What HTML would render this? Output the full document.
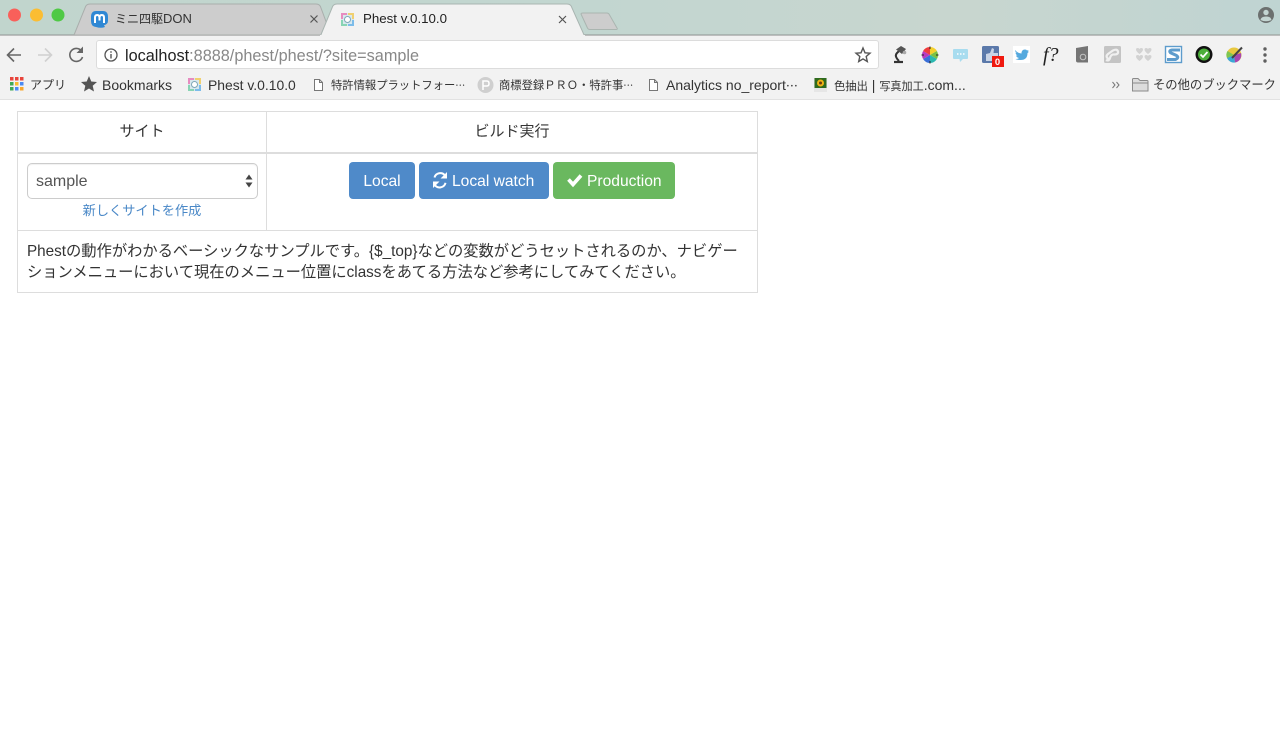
<!DOCTYPE html>
<html lang="ja">
<head>
<meta charset="utf-8">
<title>Phest v.0.10.0</title>
<style>
html,body{margin:0;padding:0;width:1280px;height:745px;overflow:hidden;background:#fff;}
body{position:relative;font-family:"Liberation Sans","Noto Sans CJK JP",sans-serif;color:#333;}
.a{position:absolute;white-space:nowrap;}
svg{position:absolute;overflow:visible;}
.bm{font-size:13px;line-height:16px;top:77px;color:#333;}
.el{font-family:"Noto Sans CJK JP",sans-serif;font-size:10px;}
.cell{position:absolute;box-sizing:border-box;}
.btn{position:absolute;top:162px;height:37px;border-radius:4px;color:#fff;font-size:15.600px;line-height:39px;text-align:center;white-space:nowrap;box-sizing:border-box;}
</style>
</head>
<body>
<!-- title bar -->
<div class="a" style="left:0;top:0;width:1280px;height:35px;background:linear-gradient(90deg,#c1d5cd 0%,#c2d6d0 45%,#c8d6cf 75%,#bfd4d2 100%);"></div>
<div class="a" style="left:0;top:34px;width:1280px;height:1px;background:#a9b5b1;"></div>
<svg style="left:0;top:0" width="1280" height="40">
  <circle cx="14.500" cy="15" r="6.500" fill="#f9605a"/>
  <circle cx="36.500" cy="15" r="6.500" fill="#fbbd32"/>
  <circle cx="58" cy="15" r="6.500" fill="#4fc945"/>
  <path d="M74 35 L85 8 Q86 4 90 4 L316 4 Q320 4 321 8 L331 35 Z" fill="#cdcdcd" stroke="#a9aeac" stroke-width="1"/>
  <path d="M320 37 L332 8 Q333 4 337 4 L567 4 Q571 4 572 8 L585 37 Z" fill="#f2f2f2" stroke="#a9b5b1" stroke-width="1"/>
  <path d="M581 14 Q581 13 583 13 L607 13 Q608 13 609 14 L617 28 Q618 29.500 616 29.500 L590 29.500 Q588 29.500 587.500 28 Z" fill="#cdcdcd" stroke="#aab5b0" stroke-width="1"/>
  <!-- mastodon -->
  <path d="M96 11 Q91 11 91 17 L91 21 Q91 26.500 96 27 Q101 28.500 105 27 L104 25.200 Q108 24.500 108 20.500 L108 17 Q108 11 103 11 Z" fill="#3088d4"/>
  <path d="M95 23 L95 17.500 Q95 15 97.200 15 Q99.500 15 99.500 18 L99.500 20.500 M99.500 18 Q99.500 15 101.800 15 Q104 15 104 17.500 L104 23" fill="none" stroke="#fff" stroke-width="2"/>
  <!-- close x -->
  <path d="M310.500 15.500 L317.500 22.500 M317.500 15.500 L310.500 22.500 M559 16 L566 23 M566 16 L559 23" stroke="#555" stroke-width="1.200"/>
  <!-- phest tab icon -->
  <g transform="translate(341,13)">
    <rect x="0" y="0" width="13" height="13" rx="1.500" fill="#d8e8ee"/>
    <path d="M0 0H6V2H2V6H0Z" fill="#e78cc0"/><path d="M7 0H13V6H11V2H7Z" fill="#f0d070"/><path d="M0 7H2V11H6V13H0Z" fill="#88d4b4"/><path d="M13 7V13H7V11H11V7Z" fill="#7cbcea"/>
    <circle cx="6.500" cy="6.500" r="3" fill="#fff" stroke="#7fa8b8" stroke-width="1"/>
  </g>
  <!-- avatar -->
  <circle cx="1266" cy="15" r="8" fill="#6c706f"/>
  <circle cx="1266" cy="12.500" r="2.700" fill="#c3d5d2"/>
  <path d="M1260.500 20 Q1261 16.500 1266 16.500 Q1271 16.500 1271.500 20 Q1266 22.500 1260.500 20Z" fill="#c3d5d2"/>
</svg>
<div class="a" style="left:115px;top:11px;font-size:13px;line-height:16px;color:#333;"><span style="font-size:12px">ミニ四駆</span>DON</div>
<div class="a" style="left:363px;top:11px;font-size:13.300px;line-height:16px;color:#222;">Phest v.0.10.0</div>

<!-- toolbar -->
<div class="a" style="left:0;top:35px;width:1280px;height:65px;background:#f2f2f2;"></div>
<div class="a" style="left:0;top:35px;width:320px;height:1px;background:#bdbdbd;"></div>
<div class="a" style="left:585px;top:35px;width:695px;height:1px;background:#bdbdbd;"></div>
<div class="a" style="left:0;top:99px;width:1280px;height:1px;background:#e2e2e2;"></div>
<div class="a" style="left:96px;top:40px;width:783px;height:29px;box-sizing:border-box;background:#fff;border:1px solid #dcdcdc;border-radius:3px;"></div>
<svg style="left:0;top:0" width="1280" height="100">
  <path d="M21 55 H8 M14 48.500 L7.500 55 L14 61.500" fill="none" stroke="#666" stroke-width="1.600"/>
  <path d="M38 55 H51 M45 48.500 L51.500 55 L45 61.500" fill="none" stroke="#d0d0d0" stroke-width="1.600"/>
  <path d="M81.500 51 A6.500 6.500 0 1 0 82.500 57" fill="none" stroke="#666" stroke-width="1.600"/>
  <path d="M83 46.500 V53 H76.500 Z" fill="#666"/>
  <circle cx="111" cy="55" r="6" fill="none" stroke="#555" stroke-width="1.300"/>
  <path d="M111 54 V58.500 M111 51.200 V52.800" stroke="#555" stroke-width="1.400"/>
  <path d="M863 48 L865 52.800 L870 53.200 L866.200 56.500 L867.300 61.500 L863 58.900 L858.700 61.500 L859.800 56.500 L856 53.200 L861 52.800 Z" fill="none" stroke="#555" stroke-width="1.400"/>
  <!-- lamp -->
  <path d="M894 62 H903" stroke="#333" stroke-width="2.200"/>
  <path d="M899 61 Q894 56 897 53 L900 50" fill="none" stroke="#333" stroke-width="2"/>
  <path d="M896 49.500 L901 46 L906 49 L902 54 Z" fill="#555"/>
  <circle cx="904.500" cy="52.500" r="1.800" fill="#aaa"/>
  <!-- color wheel -->
  <path d="M930 55 L930 47 A8 8 0 0 1 936.900 51Z" fill="#f4d02c"/>
  <path d="M930 55 L936.900 51 A8 8 0 0 1 936.900 59Z" fill="#7ac143"/>
  <path d="M930 55 L936.900 59 A8 8 0 0 1 930 63Z" fill="#2bb8b0"/>
  <path d="M930 55 L930 63 A8 8 0 0 1 923.100 59Z" fill="#3a6fd8"/>
  <path d="M930 55 L923.100 59 A8 8 0 0 1 923.100 51Z" fill="#b83ac0"/>
  <path d="M930 55 L923.100 51 A8 8 0 0 1 930 47Z" fill="#ef3d3d"/>
  <path d="M930 46.500 V49 M930 61 V63.500 M921.500 55 H924 M936 55 H938.500" stroke="#222" stroke-width="1"/>
  <!-- chat -->
  <path d="M954 49 H967 Q968 49 968 50 V58 Q968 59 967 59 H963 L960 62 L959.500 59 H954 Q953 59 953 58 V50 Q953 49 954 49Z" fill="#a8dcef"/>
  <path d="M957 54 H958.500 M960 54 H961.500 M963 54 H964.500" stroke="#fff" stroke-width="1.500"/>
  <!-- thumb -->
  <rect x="982" y="46" width="17" height="17" rx="1.500" fill="#5b79aa"/>
  <path d="M986 61 V54 L990 53 L992 48 L994 49 L993.500 53 H998 V61 Z" fill="#c9d4e6"/>
  <rect x="992" y="56" width="12" height="11" fill="#f0190f"/>
  <!-- twitter -->
  <rect x="1013" y="46" width="17" height="17" fill="#fff"/>
  <path d="M1015 50 Q1018 53.500 1021.500 53.500 Q1021.500 49.500 1025 49.500 Q1026.500 49.500 1027 50.500 L1028.500 50 L1027.800 51.800 L1029 51.500 Q1028.500 52.500 1027.500 53 Q1027.500 60 1020.500 60 Q1017.500 60 1015.500 59 Q1018 59 1019 58 Q1016.500 57.500 1016 55.500 L1017.500 55.500 Q1015.500 54.500 1015.500 52.500 L1017 53 Q1014.800 51.500 1015 50Z" fill="#55a9de"/>
  <!-- mail -->
  <path d="M1076 48 L1088 46 V62.500 H1078 Q1076 62.500 1076 60.500Z" fill="#757575"/>
  <circle cx="1083" cy="57" r="2.800" fill="none" stroke="#c4c4c4" stroke-width="1"/>
  <!-- grey link -->
  <rect x="1104" y="46" width="17" height="17" rx="1.500" fill="#c4c4c4"/>
  <path d="M1108.500 59 Q1105 56.500 1108 54 L1113 50.500 Q1117 48.500 1118 51.500 Q1118.500 54.500 1114.500 54.500 Q1111 54 1110 58 Q1109 61.500 1106 60" fill="none" stroke="#f0f0f0" stroke-width="2.200"/>
  <!-- hearts -->
  <g fill="#d2d2d2">
    <path d="M1136 49.500 Q1136 48 1137.800 48 Q1139 48 1139.500 49 Q1140 48 1141.200 48 Q1143 48 1143 49.500 Q1143 51.500 1139.500 54 Q1136 51.500 1136 49.500Z"/>
    <path d="M1144.500 49.500 Q1144.500 48 1146.300 48 Q1147.500 48 1148 49 Q1148.500 48 1149.700 48 Q1151.500 48 1151.500 49.500 Q1151.500 51.500 1148 54 Q1144.500 51.500 1144.500 49.500Z"/>
    <path d="M1136 56.500 Q1136 55 1137.800 55 Q1139 55 1139.500 56 Q1140 55 1141.200 55 Q1143 55 1143 56.500 Q1143 58.500 1139.500 61 Q1136 58.500 1136 56.500Z"/>
    <path d="M1144.500 56.500 Q1144.500 55 1146.300 55 Q1147.500 55 1148 56 Q1148.500 55 1149.700 55 Q1151.500 55 1151.500 56.500 Q1151.500 58.500 1148 61 Q1144.500 58.500 1144.500 56.500Z"/>
  </g>
  <!-- S -->
  <rect x="1165.500" y="46.500" width="16" height="16" fill="#fff" stroke="#5d9ccc" stroke-width="1.400"/>
  <path d="M1180 50 H1172 Q1168.500 50.500 1170.500 52.800 L1176.500 55.500 Q1179.500 57.500 1175.500 59.500 H1167" fill="none" stroke="#5d9ccc" stroke-width="3"/>
  <!-- check -->
  <circle cx="1204" cy="54.500" r="8.500" fill="#111"/>
  <circle cx="1204" cy="54.500" r="6" fill="#4cae3a"/>
  <path d="M1200.500 54.500 L1203 57 L1207.500 52" fill="none" stroke="#fff" stroke-width="1.700"/>
  <!-- colorful -->
  <circle cx="1234" cy="55" r="7.500" fill="#e8c840"/>
  <path d="M1234 55 L1241 53 A7.500 7.500 0 0 1 1235 62.500Z" fill="#a746b0"/>
  <path d="M1234 55 L1235 62.500 A7.500 7.500 0 0 1 1227 58Z" fill="#3aa7d8"/>
  <path d="M1234 55 L1227 58 A7.500 7.500 0 0 1 1227.500 51Z" fill="#7fc650"/>
  <path d="M1232 58 L1242 47.500" stroke="#444" stroke-width="2"/>
  <!-- menu -->
  <circle cx="1265" cy="49" r="1.700" fill="#5f5f5f"/><circle cx="1265" cy="55" r="1.700" fill="#5f5f5f"/><circle cx="1265" cy="61" r="1.700" fill="#5f5f5f"/>
  <!-- apps -->
  <g>
    <rect x="10" y="77" width="3.500" height="3.500" fill="#e8453c"/><rect x="15" y="77" width="3.500" height="3.500" fill="#e8453c"/><rect x="20" y="77" width="3.500" height="3.500" fill="#e8453c"/>
    <rect x="10" y="82" width="3.500" height="3.500" fill="#3fa857"/><rect x="15" y="82" width="3.500" height="3.500" fill="#f9bb2d"/><rect x="20" y="82" width="3.500" height="3.500" fill="#4a8af4"/>
    <rect x="10" y="87" width="3.500" height="3.500" fill="#3fa857"/><rect x="15" y="87" width="3.500" height="3.500" fill="#4a8af4"/><rect x="20" y="87" width="3.500" height="3.500" fill="#f9a82d"/>
  </g>
  <path d="M89 76 L91.300 81.500 L97 82 L92.700 85.700 L94 91.500 L89 88.500 L84 91.500 L85.300 85.700 L81 82 L86.700 81.500 Z" fill="#555"/>
  <g transform="translate(188,78)">
    <rect x="0" y="0" width="13" height="13" rx="1.500" fill="#d8e8ee"/>
    <path d="M0 0H6V2H2V6H0Z" fill="#e78cc0"/><path d="M7 0H13V6H11V2H7Z" fill="#f0d070"/><path d="M0 7H2V11H6V13H0Z" fill="#88d4b4"/><path d="M13 7V13H7V11H11V7Z" fill="#7cbcea"/>
    <circle cx="6.500" cy="6.500" r="3" fill="#fff" stroke="#7fa8b8" stroke-width="1"/>
  </g>
  <path d="M314.500 79.500 H319.500 L322.500 82.500 V90.500 H314.500 Z M319.500 79.500 V82.500 H322.500" fill="#fff" stroke="#777" stroke-width="1"/>
  <circle cx="485.500" cy="85" r="8" fill="#cfcfcf"/>
  <path d="M483 90 V81 H487 Q489 81 489 83.500 Q489 86 487 86 H483" fill="none" stroke="#fff" stroke-width="1.500"/>
  <path d="M649.500 79.500 H654.500 L657.500 82.500 V90.500 H649.500 Z M654.500 79.500 V82.500 H657.500" fill="#fff" stroke="#777" stroke-width="1"/>
  <rect x="814" y="78" width="13" height="14" fill="#e6e6e6"/>
  <rect x="814.500" y="78" width="12" height="10" fill="#2f6b1e"/>
  <circle cx="820.500" cy="83" r="3.500" fill="#efb416"/><circle cx="820.500" cy="83" r="1.500" fill="#6b3c10"/>
  <path d="M1112.500 82 L1115 85 L1112.500 88 M1116.500 82 L1119 85 L1116.500 88" fill="none" stroke="#777" stroke-width="1"/>
  <path d="M1132.500 91 V79.500 Q1132.500 78.500 1133.500 78.500 H1138 L1140 80.500 H1147 Q1148 80.500 1148 81.500 V91 Z" fill="#dcdcdc" stroke="#8a8a8a" stroke-width="1"/>
  <path d="M1132.500 83 H1148" stroke="#8a8a8a" stroke-width="1"/>
</svg>
<div class="a" style="left:125px;top:46px;font-size:16.250px;line-height:20px;color:#888;"><span style="color:#222">localhost</span>:8888/phest/phest/?site=sample</div>
<div class="a bm" style="left:30px;font-size:12px;">アプリ</div>
<div class="a bm" style="left:102px;font-size:14px;">Bookmarks</div>
<div class="a bm" style="left:208px;font-size:13.900px;">Phest v.0.10.0</div>
<div class="a bm" style="left:331px;font-size:11.300px;">特許情報プラットフォー<span class="el">…</span></div>
<div class="a bm" style="left:499px;font-size:11.300px;">商標登録ＰＲＯ・特許事<span class="el">…</span></div>
<div class="a bm" style="left:666px;font-size:14px;">Analytics no_report<span class="el" style="font-size:12px">…</span></div>
<div class="a bm" style="left:834px;font-size:14px;"><span style="font-size:11.300px">色抽出</span> | <span style="font-size:11.100px">写真加工</span>.com...</div>
<div class="a bm" style="left:1153px;font-size:12.300px;">その他のブックマーク</div>
<div class="a" style="left:992.500px;top:58px;width:10px;text-align:center;font-size:9.500px;line-height:9px;font-weight:bold;color:#fff;">0</div>
<div class="a" style="left:1043px;top:44px;font-family:'Liberation Serif',serif;font-style:italic;font-size:20px;line-height:22px;color:#222;">f?</div>

<!-- table -->
<div class="cell" style="left:17px;top:111px;width:741px;height:182px;border:1px solid #dddddd;"></div>
<div class="cell" style="left:266px;top:112px;width:1px;height:118px;background:#dddddd;"></div>
<div class="cell" style="left:18px;top:152px;width:739px;height:2px;background:#dddddd;"></div>
<div class="cell" style="left:18px;top:230px;width:739px;height:1px;background:#dddddd;"></div>
<div class="a" style="left:18px;width:248px;top:122px;text-align:center;font-size:15px;line-height:20px;color:#333;">サイト</div>
<div class="a" style="left:267px;width:490px;top:122px;text-align:center;font-size:15px;line-height:20px;color:#333;">ビルド実行</div>
<div class="cell" style="left:27px;top:163px;width:231px;height:36px;border:1px solid #cccccc;border-radius:5px;background:#fff;box-shadow:inset 0 1px 1px rgba(0,0,0,.06);"></div>
<div class="a" style="left:36px;top:172px;font-size:16px;line-height:20px;color:#555;">sample</div>
<svg style="left:0;top:0" width="300" height="200"><path d="M245.500 179.500 L249 174.500 L252.500 179.500Z M245.500 182.500 L249 187.500 L252.500 182.500Z" fill="#444"/></svg>
<div class="a" style="left:18px;width:248px;top:202px;text-align:center;font-size:13.200px;line-height:18px;color:#4a88c7;">新しくサイトを作成</div>
<div class="btn" style="left:349px;width:66px;background:#4f8ac9;">Local</div>
<div class="btn" style="left:419px;width:130px;background:#4f8ac9;padding-left:33px;text-align:left;">Local watch</div>
<div class="btn" style="left:553px;width:122px;background:#6ab85f;padding-left:34px;text-align:left;">Production</div>
<svg style="left:0;top:0" width="700" height="200">
  <path d="M445 175.500 A6 6 0 0 0 434.500 177.500 M434.500 184.500 A6 6 0 0 0 445.500 182.800" fill="none" stroke="#fff" stroke-width="2"/>
  <path d="M447 172 V178.500 H440.500Z M433 188 V181.500 H439.500Z" fill="#fff"/>
  <path d="M568.500 179.500 L573 184.500 L581 175.500" fill="none" stroke="#fff" stroke-width="3.600"/>
</svg>
<div class="a" style="left:27px;top:241px;font-size:15.270px;line-height:21px;color:#333;">Phestの動作がわかるベーシックなサンプルです。{$_top}などの変数がどうセットされるのか、ナビゲー</div>
<div class="a" style="left:27px;top:262px;font-size:15.270px;line-height:21px;color:#333;">ションメニューにおいて現在のメニュー位置にclassをあてる方法など参考にしてみてください。</div>
</body>
</html>
